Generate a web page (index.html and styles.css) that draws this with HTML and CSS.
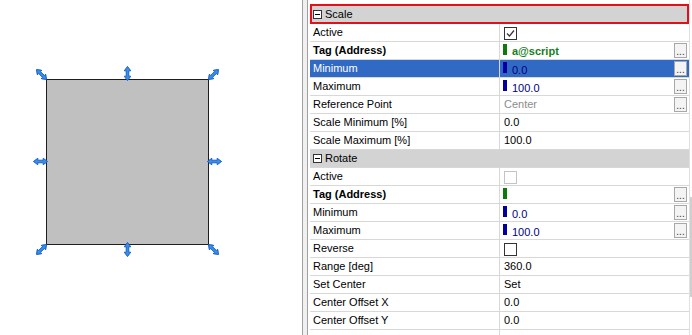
FILE: index.html
```html
<!DOCTYPE html>
<html lang="en">
<head>
    <meta charset="UTF-8">
    <title>Scale / Rotate properties</title>
    <link rel="stylesheet" href="styles.css">
</head>
<body>
    <svg width="0" height="0" class="defs">
        <defs>
            <symbol id="arrow" viewBox="0 0 7 15">
                <polygon points="3.5,0.4 6.8,4.8 4.8,4.8 4.8,10.2 6.8,10.2 3.5,14.6 0.2,10.2 2.2,10.2 2.2,4.8 0.2,4.8" fill="#3a8ee8" stroke="#1159c4" stroke-width="0.9" stroke-linejoin="round"/>
            </symbol>
        </defs>
    </svg>

    <div class="canvas">
        <div class="shape"></div>
        <svg class="handle tl"><use href="#arrow"/></svg>
        <svg class="handle tm"><use href="#arrow"/></svg>
        <svg class="handle tr"><use href="#arrow"/></svg>
        <svg class="handle ml"><use href="#arrow"/></svg>
        <svg class="handle mr"><use href="#arrow"/></svg>
        <svg class="handle bl"><use href="#arrow"/></svg>
        <svg class="handle bm"><use href="#arrow"/></svg>
        <svg class="handle br"><use href="#arrow"/></svg>
    </div>

    <div class="splitter"></div>

    <div class="grid">
        <div class="rows">
            <div class="group focused"><span class="toggle"></span>Scale</div>
            <div class="row">
                <div class="name">Active</div>
                <div class="val"><span class="check"><svg viewBox="0 0 11 11"><polyline points="2,5.5 4.5,8 9,2.5" /></svg></span></div>
            </div>
            <div class="row">
                <div class="name bold">Tag (Address)</div>
                <div class="val"><span class="bar green"></span><span class="tag">a@script</span><span class="more">...</span></div>
            </div>
            <div class="row selected">
                <div class="name">Minimum</div>
                <div class="val"><span class="bar blue"></span><span class="num">0.0</span><span class="more">...</span></div>
            </div>
            <div class="row">
                <div class="name">Maximum</div>
                <div class="val"><span class="bar blue"></span><span class="num">100.0</span><span class="more">...</span></div>
            </div>
            <div class="row">
                <div class="name">Reference Point</div>
                <div class="val"><span class="dim">Center</span><span class="more">...</span></div>
            </div>
            <div class="row">
                <div class="name">Scale Minimum [%]</div>
                <div class="val">0.0</div>
            </div>
            <div class="row">
                <div class="name">Scale Maximum [%]</div>
                <div class="val">100.0</div>
            </div>

            <div class="group"><span class="toggle"></span>Rotate</div>
            <div class="row">
                <div class="name">Active</div>
                <div class="val"><span class="check off"></span></div>
            </div>
            <div class="row">
                <div class="name bold">Tag (Address)</div>
                <div class="val"><span class="bar green"></span><span class="more">...</span></div>
            </div>
            <div class="row">
                <div class="name">Minimum</div>
                <div class="val"><span class="bar blue"></span><span class="num">0.0</span><span class="more">...</span></div>
            </div>
            <div class="row">
                <div class="name">Maximum</div>
                <div class="val"><span class="bar blue"></span><span class="num">100.0</span><span class="more">...</span></div>
            </div>
            <div class="row">
                <div class="name">Reverse</div>
                <div class="val"><span class="check"></span></div>
            </div>
            <div class="row">
                <div class="name">Range [deg]</div>
                <div class="val">360.0</div>
            </div>
            <div class="row">
                <div class="name">Set Center</div>
                <div class="val">Set</div>
            </div>
            <div class="row">
                <div class="name">Center Offset X</div>
                <div class="val">0.0</div>
            </div>
            <div class="row">
                <div class="name">Center Offset Y</div>
                <div class="val">0.0</div>
            </div>
            <div class="row">
                <div class="name"></div>
                <div class="val low">1235.7543004053558</div>
            </div>
        </div>
        <div class="scrollbar"><div class="thumb"></div></div>
    </div>
</body>
</html>
```

FILE: styles.css
```css
body {
    margin: 0;
    font-family: "Liberation Sans", Arial, sans-serif;
    font-size: 11px;
    color: #000;
    background: #fff;
    display: flex;
    height: 335px;
    overflow: hidden;
}
.defs {
    position: absolute;
}

/* designer canvas */
.canvas {
    position: relative;
    width: 302px;
    flex-shrink: 0;
    background: #fff;
}
.shape {
    position: absolute;
    left: 46px;
    top: 79px;
    width: 163px;
    height: 166px;
    box-sizing: border-box;
    border: 1px solid #1e1e1e;
    background: #c0c0c0;
}
.handle {
    position: absolute;
    width: 7px;
    height: 15px;
}
.tl { left: 37.5px; top: 66.5px; transform: rotate(-45deg); }
.tm { left: 123.5px; top: 65.5px; }
.tr { left: 210px; top: 66.5px; transform: rotate(45deg); }
.ml { left: 36.5px; top: 153.5px; transform: rotate(90deg); }
.mr { left: 210.5px; top: 153.5px; transform: rotate(90deg); }
.bl { left: 37.5px; top: 241.5px; transform: rotate(45deg); }
.bm { left: 123.5px; top: 241.5px; }
.br { left: 210px; top: 241.5px; transform: rotate(-45deg); }

.splitter {
    width: 4px;
    flex-shrink: 0;
    background: #f0f0f0;
    border-left: 1px solid #a0a0a0;
    border-right: 1px solid #a0a0a0;
}

/* property grid */
.grid {
    display: flex;
    padding-left: 2px;
    padding-top: 4px;
}
.rows {
    width: 379px;
}
.group {
    height: 18px;
    line-height: 17px;
    box-sizing: border-box;
    border-bottom: 1px solid #d8d8d8;
    background: #d3d3d3;
    padding-left: 3px;
    display: flex;
    align-items: center;
}
.group.focused {
    height: 20px;
    border: 2px solid #e3101a;
    padding-left: 1px;
}
.toggle {
    width: 7px;
    height: 7px;
    border: 1px solid #333;
    background: #fff;
    margin-right: 3px;
    position: relative;
}
.toggle::after {
    content: "";
    position: absolute;
    left: 1px;
    right: 1px;
    top: 3px;
    height: 1px;
    background: #000;
}
.row {
    display: grid;
    grid-template-columns: 190px 1fr;
    height: 18px;
    box-sizing: border-box;
    border-bottom: 1px solid #d8d8d8;
    line-height: 17px;
}
.name {
    border-right: 1px solid #d8d8d8;
    padding-left: 3px;
    white-space: nowrap;
}
.bold {
    font-weight: bold;
}
.val {
    display: flex;
    align-items: flex-start;
    padding-left: 4px;
    white-space: nowrap;
    overflow: hidden;
}
.selected {
    background: #316ac5;
}
.selected .name {
    color: #fff;
}
.bar {
    width: 4px;
    height: 11px;
    margin: 2px 5px 0 -1px;
    flex-shrink: 0;
}
.bar.blue {
    background: #0000a0;
}
.bar.green {
    background: #0c7a0c;
}
.tag {
    font-weight: bold;
    color: #14801a;
    padding-top: 1px;
}
.num {
    color: #000080;
    padding-top: 2px;
}
.dim {
    color: #8c8c8c;
}
.low {
    padding-top: 3px;
}
.more {
    margin-left: auto;
    margin-right: 2px;
    margin-top: 1px;
    width: 13px;
    height: 15px;
    box-sizing: border-box;
    border: 1px solid #a8a8a8;
    background: #f4f4f4;
    font-size: 10px;
    line-height: 15px;
    text-align: center;
    color: #333;
    flex-shrink: 0;
    overflow: hidden;
}
.check {
    width: 13px;
    height: 13px;
    box-sizing: border-box;
    border: 1px solid #333;
    background: #fff;
    margin-top: 3px;
    display: flex;
    align-items: center;
    justify-content: center;
}
.check.off {
    border-color: #c4c4c4;
}
.check svg {
    width: 11px;
    height: 11px;
    fill: none;
    stroke: #333;
    stroke-width: 1.2;
}
.scrollbar {
    width: 3px;
    border-left: 1px solid #e0e0e0;
    margin-top: -4px;
}
.thumb {
    margin-top: 197px;
    height: 100px;
    background: #cfcfcf;
}
```
